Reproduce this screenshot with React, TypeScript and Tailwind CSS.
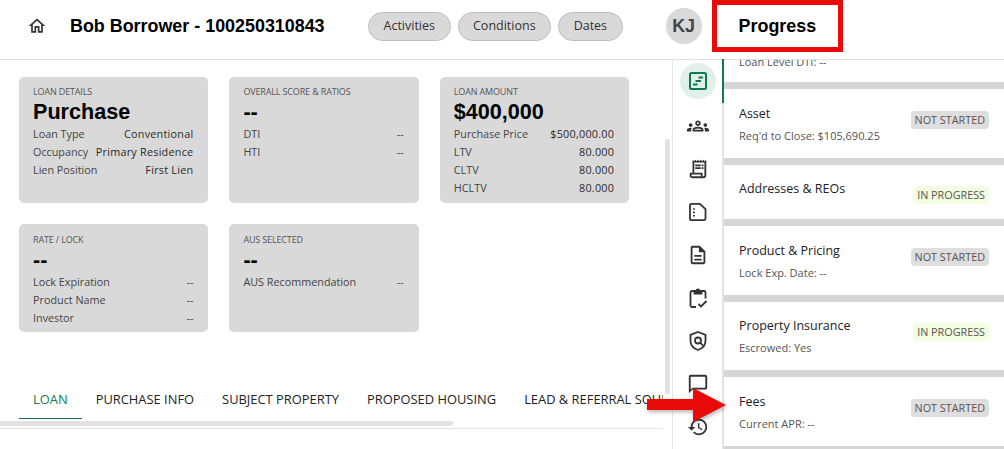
const SANS = "font-['Open_Sans','Noto_Sans',sans-serif]";

const PATHS = {
  home: "m12 5.69 5 4.5V18h-2v-6H9v6H7v-7.81l5-4.5M12 3 2 12h3v8h6v-6h2v6h6v-8h3L12 3z",
  groups:
    "M4 13c1.1 0 2-.9 2-2s-.9-2-2-2-2 .9-2 2 .9 2 2 2zm1.13 1.1c-.37-.06-.74-.1-1.13-.1-.99 0-1.93.21-2.78.58C.48 14.9 0 15.62 0 16.43V18h4.5v-1.61c0-.83.23-1.61.63-2.29zM20 13c1.1 0 2-.9 2-2s-.9-2-2-2-2 .9-2 2 .9 2 2 2zm4 3.43c0-.81-.48-1.53-1.22-1.85-.85-.37-1.79-.58-2.78-.58-.39 0-.76.04-1.13.1.4.68.63 1.46.63 2.29V18H24v-1.57zm-7.76-2.78C15.07 13.13 13.63 12.75 12 12.75c-1.63 0-3.07.39-4.24.9C6.68 14.13 6 15.21 6 16.39V18h12v-1.61c0-1.18-.68-2.26-1.76-2.74zM8.07 16c.09-.23.13-.39.91-.69.97-.38 1.99-.56 3.02-.56s2.05.18 3.02.56c.77.3.81.46.91.69H8.07zM12 8c.55 0 1 .45 1 1s-.45 1-1 1-1-.45-1-1 .45-1 1-1m0-2c-1.66 0-3 1.34-3 3s1.34 3 3 3 3-1.34 3-3-1.34-3-3-3z",
  receipt:
    "M19.5 3.5 18 2l-1.5 1.5L15 2l-1.5 1.5L12 2l-1.5 1.5L9 2 7.5 3.5 6 2v14H3v3c0 1.66 1.34 3 3 3h12c1.66 0 3-1.34 3-3V2l-1.5 1.5zM15 20H6c-.55 0-1-.45-1-1v-1h10v2zm4-1c0 .55-.45 1-1 1s-1-.45-1-1v-3H8V5h11v14zM9 7h6v2H9zm7 0h2v2h-2zm-7 3h6v2H9zm7 0h2v2h-2z",
  doc: "M8 16h8v2H8zm0-4h8v2H8zm6-10H6c-1.1 0-2 .9-2 2v16c0 1.1.89 2 1.99 2H18c1.1 0 2-.9 2-2V8l-6-6zm4 18H6V4h7v5h5v11z",
  chat: "M20 2H4c-1.1 0-2 .9-2 2v18l4-4h14c1.1 0 2-.9 2-2V4c0-1.1-.9-2-2-2zm0 14H6l-2 2V4h16v12z",
  history:
    "M13 3c-4.97 0-9 4.03-9 9H1l3.89 3.89.07.14L9 12H6c0-3.87 3.13-7 7-7s7 3.13 7 7-3.13 7-7 7c-1.93 0-3.68-.79-4.94-2.06l-1.42 1.42C8.27 19.99 10.51 21 13 21c4.97 0 9-4.03 9-9s-4.03-9-9-9zm-1 5v5l4.28 2.54.72-1.21-3.5-2.08V8H12z",
};

function Icon({ d, size = 22, className = "text-[#333]" }: { d: string; size?: number; className?: string }) {
  return (
    <svg width={size} height={size} viewBox="0 0 24 24" fill="currentColor" className={className}>
      <path d={d} />
    </svg>
  );
}

function TimelineIcon() {
  return (
    <svg width="20" height="20" viewBox="0 0 20 20" fill="none" stroke="#0f7a52" strokeWidth="2">
      <rect x="2" y="2" width="16" height="16" rx="1.5" />
      <path d="M10.5 6.5H15M7.5 10h5.500M5 13.500h4.500" />
    </svg>
  );
}

function NoteIcon() {
  return (
    <svg width="20" height="20" viewBox="0 0 20 20" fill="none" stroke="#333" strokeWidth="1.8">
      <path d="M3.500 1.800h8.300l5.700 5.400v9.500a1.500 1.500 0 0 1-1.500 1.500H3.500A1.500 1.500 0 0 1 2 16.700V3.300a1.500 1.500 0 0 1 1.500-1.500z" />
      <path d="M6 6.200v1.600M6 9.600v1.600M6 13v1.600" />
    </svg>
  );
}

function ClipboardIcon() {
  return (
    <svg width="22" height="22" viewBox="0 0 22 22" fill="none" stroke="#333" strokeWidth="1.8">
      <path d="M8 4H5a1.500 1.500 0 0 0-1.500 1.500v13A1.500 1.500 0 0 0 5 20h4" />
      <path d="M14 4h3a1.500 1.500 0 0 1 1.500 1.500v6" />
      <path d="M7.500 6.500V4h2a1.500 1.500 0 0 1 3 0h2v2.500z" fill="#333" />
      <path d="M11.500 17l2.500 2.500 5.500-5.500" />
    </svg>
  );
}

function ShieldIcon() {
  return (
    <svg width="22" height="22" viewBox="0 0 22 22" fill="none" stroke="#333" strokeWidth="1.8">
      <path d="M11 2l7.500 2.800v6c0 4.500-3.200 7.800-7.500 9.200-4.300-1.400-7.500-4.700-7.500-9.200v-6z" />
      <circle cx="11" cy="10.500" r="3" />
      <path d="M13.200 12.700l3 3" />
    </svg>
  );
}

type Row = [string, string];

function Card({
  label,
  value,
  rows,
  boldValues = false,
  tall = true,
}: {
  label: string;
  value: string;
  rows: Row[];
  boldValues?: boolean;
  tall?: boolean;
}) {
  return (
    <div className={`w-[189.4px] rounded-[5px] bg-[#d9d9d9] pr-[15px] pl-[14px] ${tall ? "h-[126px] pt-[9px]" : "h-[108px] pt-[10px]"}`}>
      <p className="text-[9px] leading-[11px] tracking-[-0.15px] text-[#555]">{label}</p>
      <p className="mt-[2px] font-['Liberation_Sans',sans-serif] text-[21.6px] leading-[26px] font-bold text-black">{value}</p>
      <div>
        {rows.map(([k, v]) => (
          <div key={k} className="flex h-[18px] items-center justify-between text-[10.8px] text-[#444]">
            <span>{k}</span>
            <span className={boldValues ? "font-medium tracking-[0.25px] text-[#2a2a2a]" : ""}>{v}</span>
          </div>
        ))}
      </div>
    </div>
  );
}

function Status({ inProgress = false, tight = false }: { inProgress?: boolean; tight?: boolean }) {
  const place = tight ? "mt-[21px]" : "mt-[22px]";
  return inProgress ? (
    <span className={`mr-[15px] rounded-[4px] bg-[#f3fde0] px-1 text-[10.8px] leading-[18px] text-[#555] ${place}`}>IN PROGRESS</span>
  ) : (
    <span className={`mr-[15px] rounded-[4px] bg-[#dedede] px-1 text-[10.8px] leading-[18px] text-[#555] ${place}`}>NOT STARTED</span>
  );
}

function Section({
  title,
  sub,
  inProgress,
  tight,
  height,
}: {
  title: string;
  sub?: string;
  inProgress?: boolean;
  tight?: boolean;
  height: string;
}) {
  return (
    <section className={`flex items-start justify-between bg-white pl-[15px] ${height}`}>
      <div className={tight ? "pt-[15px]" : "pt-[16px]"}>
        <p className="text-[12.5px] leading-[18px] text-[#222]">{title}</p>
        {sub && <p className="mt-[5px] text-[11px] leading-[15px] text-[#555]">{sub}</p>}
      </div>
      <Status inProgress={inProgress} tight={tight} />
    </section>
  );
}

export default function App() {
  return (
    <div className={`relative flex h-[449px] w-[1004px] flex-col overflow-hidden bg-white ${SANS}`}>
      <header className="flex h-[60px] shrink-0 items-center border-b border-[#e0e0e0] pb-[7px]">
        <div className="ml-[26px] flex w-[22px] justify-center">
          <Icon d={PATHS.home} size={20} />
        </div>
        <h1 className="ml-[22px] w-[298px] font-['Liberation_Sans',sans-serif] text-[17.9px] font-bold text-black">
          Bob Borrower - 100250310843
        </h1>
        <div className="flex gap-[7px]">
          {["Activities", "Conditions", "Dates"].map((t) => (
            <span key={t} className="flex h-[29px] items-center rounded-full border border-[#bdbdbd] bg-[#d9d9d9] px-[14.5px] text-[12.5px] text-[#333]">
              {t}
            </span>
          ))}
        </div>
        <div className="ml-[43px] flex h-9 w-9 items-center justify-center rounded-full bg-[#d9d9d9] font-['Liberation_Sans',sans-serif] text-[17.9px] font-bold text-[#444]">
          KJ
        </div>
        <h2 className="mt-[1px] ml-[37px] font-['Liberation_Sans',sans-serif] text-[17.9px] font-bold text-black">Progress</h2>
      </header>

      <div className="flex min-h-0 flex-1">
        <main className="relative flex w-[672px] shrink-0 flex-col pl-[19px]">
          <div className="mt-[17px] flex gap-[21px]">
            <Card
              label="LOAN DETAILS"
              value="Purchase"
              boldValues
              rows={[
                ["Loan Type", "Conventional"],
                ["Occupancy", "Primary Residence"],
                ["Lien Position", "First Lien"],
              ]}
            />
            <Card
              label="OVERALL SCORE & RATIOS"
              value="--"
              rows={[
                ["DTI", "--"],
                ["HTI", "--"],
              ]}
            />
            <Card
              label="LOAN AMOUNT"
              value="$400,000"
              boldValues
              rows={[
                ["Purchase Price", "$500,000.00"],
                ["LTV", "80.000"],
                ["CLTV", "80.000"],
                ["HCLTV", "80.000"],
              ]}
            />
          </div>
          <div className="mt-[21px] flex gap-[21px]">
            <Card
              tall={false}
              label="RATE / LOCK"
              value="--"
              rows={[
                ["Lock Expiration", "--"],
                ["Product Name", "--"],
                ["Investor", "--"],
              ]}
            />
            <Card tall={false} label="AUS SELECTED" value="--" rows={[["AUS Recommendation", "--"]]} />
          </div>

          <nav className="mt-[49px] flex h-[38px] w-[644px] overflow-hidden whitespace-nowrap text-[12.9px] font-medium text-[#222]">
            <span className="flex h-[38px] items-center border-b border-[#0f7a52] px-[14px] text-[#0f7a52]">LOAN</span>
            {["PURCHASE INFO", "SUBJECT PROPERTY", "PROPOSED HOUSING", "LEAD & REFERRAL SOURCE"].map((t) => (
              <span key={t} className="flex h-[38px] items-center px-[14px]">
                {t}
              </span>
            ))}
          </nav>
          <div className="-ml-[19px] mt-[2px] h-[5px] w-[453px] rounded-r-full bg-[#e2e2e2]" />
          <div className="-ml-[19px] mt-[2px] h-px w-[663px] bg-[#e3e3e3]" />

          {/* vertical scrollbar of the main pane */}
          <div className="absolute top-[79px] left-[665px] h-[255px] w-[5px] rounded-full bg-[#e2e2e2]" />
        </main>

        <aside className="relative flex w-[52px] shrink-0 flex-col items-center border-r-2 border-l border-r-[#e3e3e3] border-l-[#e6e6e6] pt-[3px] pl-[1px]">
          <div className="absolute top-[-1px] right-[-2px] h-[44px] w-[2px] bg-[#0f7a52]" />
          <div className="flex h-9 w-9 items-center justify-center rounded-full bg-[#e1f1ea]">
            <TimelineIcon />
          </div>
          <div className="mt-[5px] flex flex-col items-center">
            {[
              <Icon key="g" d={PATHS.groups} size={22} />,
              <Icon key="r" d={PATHS.receipt} size={22} />,
              <NoteIcon key="n" />,
              <Icon key="d" d={PATHS.doc} size={22} />,
              <ClipboardIcon key="c" />,
              <ShieldIcon key="s" />,
              <Icon key="m" d={PATHS.chat} size={22} />,
              <Icon key="h" d={PATHS.history} size={22} />,
            ].map((icon, i) => (
              <div key={i} className="flex h-[43px] w-9 items-center justify-center">
                {icon}
              </div>
            ))}
          </div>
        </aside>

        <div className="flex min-w-0 flex-1 flex-col gap-[7px] overflow-hidden bg-[#d6d6d6]">
          <section className="h-[22px] shrink-0 overflow-hidden bg-white pl-[15px]">
            <p className="-mt-[6px] text-[11px] leading-[15px] text-[#555]">Loan Level DTI: --</p>
          </section>
          <Section height="h-[69px] shrink-0" title="Asset" sub="Req'd to Close: $105,690.25" />
          <Section height="h-[54px] shrink-0" title="Addresses & REOs" inProgress tight />
          <Section height="h-[69px] shrink-0" title="Product & Pricing" sub="Lock Exp. Date: --" />
          <Section height="h-[68px] shrink-0" title="Property Insurance" sub="Escrowed: Yes" inProgress tight />
          <Section height="h-[69px] shrink-0" title="Fees" sub="Current APR: --" />
        </div>
      </div>

      {/* annotations on top of the screenshot */}
      <div className="absolute top-0 left-[712px] h-[52px] w-[131px] border-[5px] border-[#ea0a0a]" />
      <svg className="absolute top-[385px] left-[645px] drop-shadow-[1px_2px_2px_rgba(0,0,0,0.3)]" width="84" height="44" viewBox="0 0 84 44">
        <path d="M2 14h46V3l33 17-33 17V25H2z" fill="#ea0a0a" />
      </svg>
    </div>
  );
}
